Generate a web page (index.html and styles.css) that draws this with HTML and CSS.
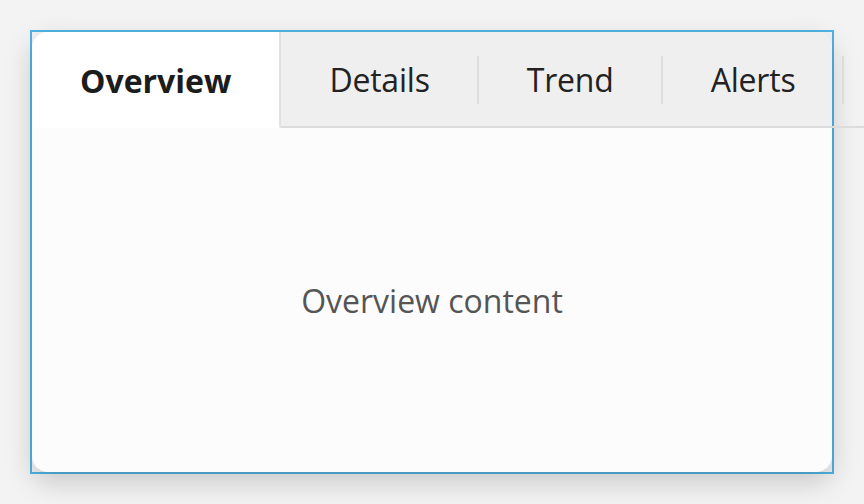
FILE: index.html
```
<!DOCTYPE html>
<html lang="en">
<head>
<meta charset="utf-8">
<title>Tabs</title>
<link rel="stylesheet" href="styles.css">
</head>
<body>
<div class="frame">
  <div class="card">
    <div class="tablist" role="tablist">
      <div class="tab active" role="tab">Overview</div>
      <div class="tab first" role="tab">Details</div>
      <div class="tab sep" role="tab">Trend</div>
      <div class="tab sep" role="tab">Alerts</div>
      <div class="tab sep" role="tab">History</div>
    </div>
    <div class="panel">Overview content</div>
  </div>
</div>
</body>
</html>
```
FILE: styles.css
```
html, body {
  margin: 0;
  padding: 0;
}
body {
  background: #f3f3f3;
  font-family: "Open Sans", "Noto Sans", sans-serif;
  width: 864px;
  height: 504px;
  overflow: hidden;
}
.frame {
  margin: 30px;
  width: 800px;
  height: 440px;
  border: 2px solid #52b3e4;
}
.card {
  width: 800px;
  height: 440px;
  background: #fcfcfc;
  border-radius: 16px;
  box-shadow: 0 10px 28px rgba(0, 0, 0, 0.18);
  display: flex;
  flex-direction: column;
}
.tablist {
  display: flex;
  flex-wrap: nowrap;
  height: 96px;
  background: #efefef;
  border-radius: 16px 16px 0 0;
  flex-shrink: 0;
}
.tab {
  flex-shrink: 0;
  box-sizing: border-box;
  height: 96px;
  padding: 0 47px 0 48px;
  display: flex;
  align-items: center;
  font-size: 32px;
  letter-spacing: -0.2px;
  color: #222;
  border-bottom: 2px solid #dcdcdc;
  position: relative;
}
.tab.active {
  background: #ffffff;
  font-weight: 700;
  letter-spacing: 0;
  color: #1c1c1c;
  border-bottom: none;
  border-top-left-radius: 16px;
  padding: 0 48px;
}
.tab.first {
  border-left: 2px solid #e1e1e1;
  border-bottom-left-radius: 3px;
}
.tab.sep {
  padding-left: 50px;
}
.tab.sep::before {
  content: "";
  position: absolute;
  left: 0;
  top: 24px;
  width: 2px;
  height: 48px;
  background: #dcdcdc;
}
.panel {
  flex: 1;
  display: flex;
  align-items: center;
  justify-content: center;
  font-size: 32px;
  color: #555;
}
```
